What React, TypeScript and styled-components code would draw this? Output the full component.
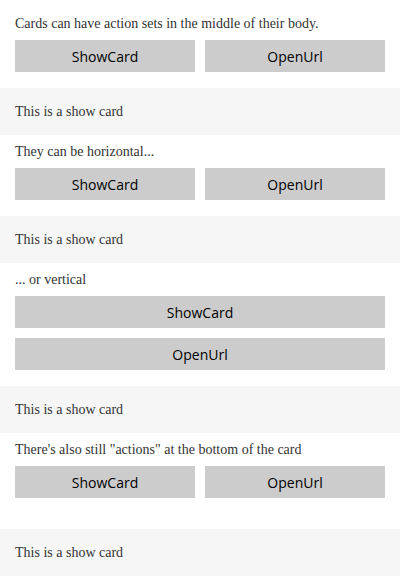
import React from 'react'
import styled, { createGlobalStyle } from 'styled-components'

const GlobalStyle = createGlobalStyle`
  html, body {
    margin: 0;
    padding: 0;
    background: #ffffff;
  }
  body {
    font-family: "Liberation Serif", "Times New Roman", serif;
  }
`

const Card = styled.div`
  display: flex;
  flex-direction: column;
  width: 400px;
  box-sizing: border-box;
  background: #ffffff;
`

const Body = styled.div<{ $bottom?: number }>`
  display: flex;
  flex-direction: column;
  gap: 8px;
  padding: 8px 15px ${({ $bottom }) => $bottom ?? 16}px;
  &:first-child {
    padding-top: 15px;
  }
`

const TextBlock = styled.div`
  font-size: 14px;
  line-height: 17px;
  color: #333333;
`

const ActionSet = styled.div<{ $vertical?: boolean }>`
  display: flex;
  flex-direction: ${({ $vertical }) => ($vertical ? 'column' : 'row')};
  gap: 10px;

  & > button {
    flex: ${({ $vertical }) => ($vertical ? '0 0 32px' : '1 1 0')};
  }
`

const Button = styled.button`
  height: 32px;
  border: none;
  margin: 0;
  padding: 0;
  background: #cccccc;
  color: #000000;
  font-family: "Open Sans", "Noto Sans", sans-serif;
  font-size: 14px;
  cursor: pointer;
`

const ShowCard = styled.div`
  padding: 15px;
  background: #f6f6f6;
`

const Actions = ({ vertical }: { vertical?: boolean }) => (
  <ActionSet $vertical={vertical}>
    <Button>ShowCard</Button>
    <Button>OpenUrl</Button>
  </ActionSet>
)

const sections = [
  { text: 'Cards can have action sets in the middle of their body.' },
  { text: 'They can be horizontal...' },
  { text: '... or vertical', vertical: true },
  { text: 'There\'s also still "actions" at the bottom of the card', bottom: 31 },
]

export default function App() {
  return (
    <>
      <GlobalStyle />
      <Card>
        {sections.map((s, i) => (
          <React.Fragment key={i}>
            <Body $bottom={s.bottom}>
              <TextBlock>{s.text}</TextBlock>
              <Actions vertical={s.vertical} />
            </Body>
            <ShowCard>
              <TextBlock>This is a show card</TextBlock>
            </ShowCard>
          </React.Fragment>
        ))}
      </Card>
    </>
  )
}
